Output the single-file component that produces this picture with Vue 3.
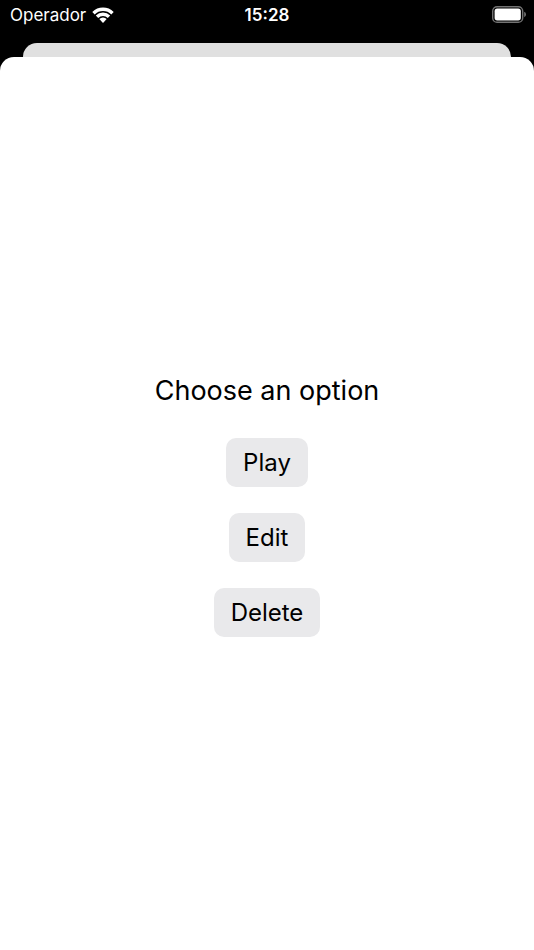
<template>
  <div class="screen">
    <header class="status-bar">
      <div class="carrier">
        <span>Operador</span>
        <svg class="wifi" viewBox="0 0 22 16" aria-hidden="true">
          <path d="M0.3 4.9A15.2 15.2 0 0 1 21.7 4.9L19.3 7.4A11.8 11.8 0 0 0 2.7 7.4Z" />
          <path d="M3.8 8.5A10.2 10.2 0 0 1 18.2 8.5L15.8 11A6.9 6.9 0 0 0 6.2 11Z" />
          <path d="M7.3 12.1A5.3 5.3 0 0 1 14.7 12.1L11 15.9Z" />
        </svg>
      </div>
      <time class="clock">{{ time }}</time>
      <svg class="battery" viewBox="0 0 34 17" aria-hidden="true">
        <rect class="battery-case" x="0.7" y="0.7" width="30" height="15.6" rx="4.4" />
        <rect x="2.6" y="2.6" width="26.2" height="11.8" rx="2.6" />
        <path class="battery-cap" d="M32.2 5.8Q34 6.6 34 8.5T32.2 11.2Z" />
      </svg>
    </header>

    <div class="back-sheet"></div>

    <main class="sheet">
      <h1 class="title">Choose an option</h1>
      <button
        v-for="option in options"
        :key="option"
        type="button"
        class="option"
        @click="choose(option)"
      >
        {{ option }}
      </button>
    </main>
  </div>
</template>

<script setup>
import { ref } from 'vue'

const time = '15:28'
const options = ['Play', 'Edit', 'Delete']
const selected = ref(null)

// Remember the last option tapped
function choose(option) {
  selected.value = option
}
</script>

<style>
body {
  margin: 0;
  background-color: #000;
}
</style>

<style scoped>
.screen {
  display: flex;
  flex-direction: column;
  min-height: 100vh;
  background-color: #000;
  font-family: Inter, "Liberation Sans", sans-serif;
}

.status-bar {
  display: grid;
  grid-template-columns: 1fr auto 1fr;
  align-items: center;
  height: 29px;
  padding: 0 8px;
  margin-bottom: 14px;
  color: #fff;
  font-size: 17px;
}

.carrier {
  display: flex;
  align-items: center;
  gap: 6px;
  padding-left: 2px;
}

.wifi {
  width: 22px;
  height: 16px;
  fill: #fff;
}

.clock {
  font-weight: 600;
}

.battery {
  justify-self: end;
  width: 34px;
  height: 17px;
  fill: #fff;
}

.battery-case {
  fill: none;
  stroke: #737373;
  stroke-width: 1.4;
}

.battery-cap {
  fill: #737373;
}

.back-sheet {
  height: 14px;
  margin: 0 23px;
  border-radius: 14px 14px 0 0;
  background-color: #e0e0e0;
}

.sheet {
  flex: 1;
  display: flex;
  flex-direction: column;
  align-items: center;
  justify-content: center;
  gap: 26px;
  border-radius: 14px 14px 0 0;
  background-color: #fff;
}

.title {
  margin: 0;
  color: #000;
  font-size: 27px;
  font-weight: 400;
  line-height: 42px;
}

.option {
  padding: 0 17px;
  border: none;
  border-radius: 10px;
  background-color: #e9e9eb;
  color: #000;
  font-family: inherit;
  font-size: 24px;
  line-height: 49px;
  cursor: pointer;
}
</style>
